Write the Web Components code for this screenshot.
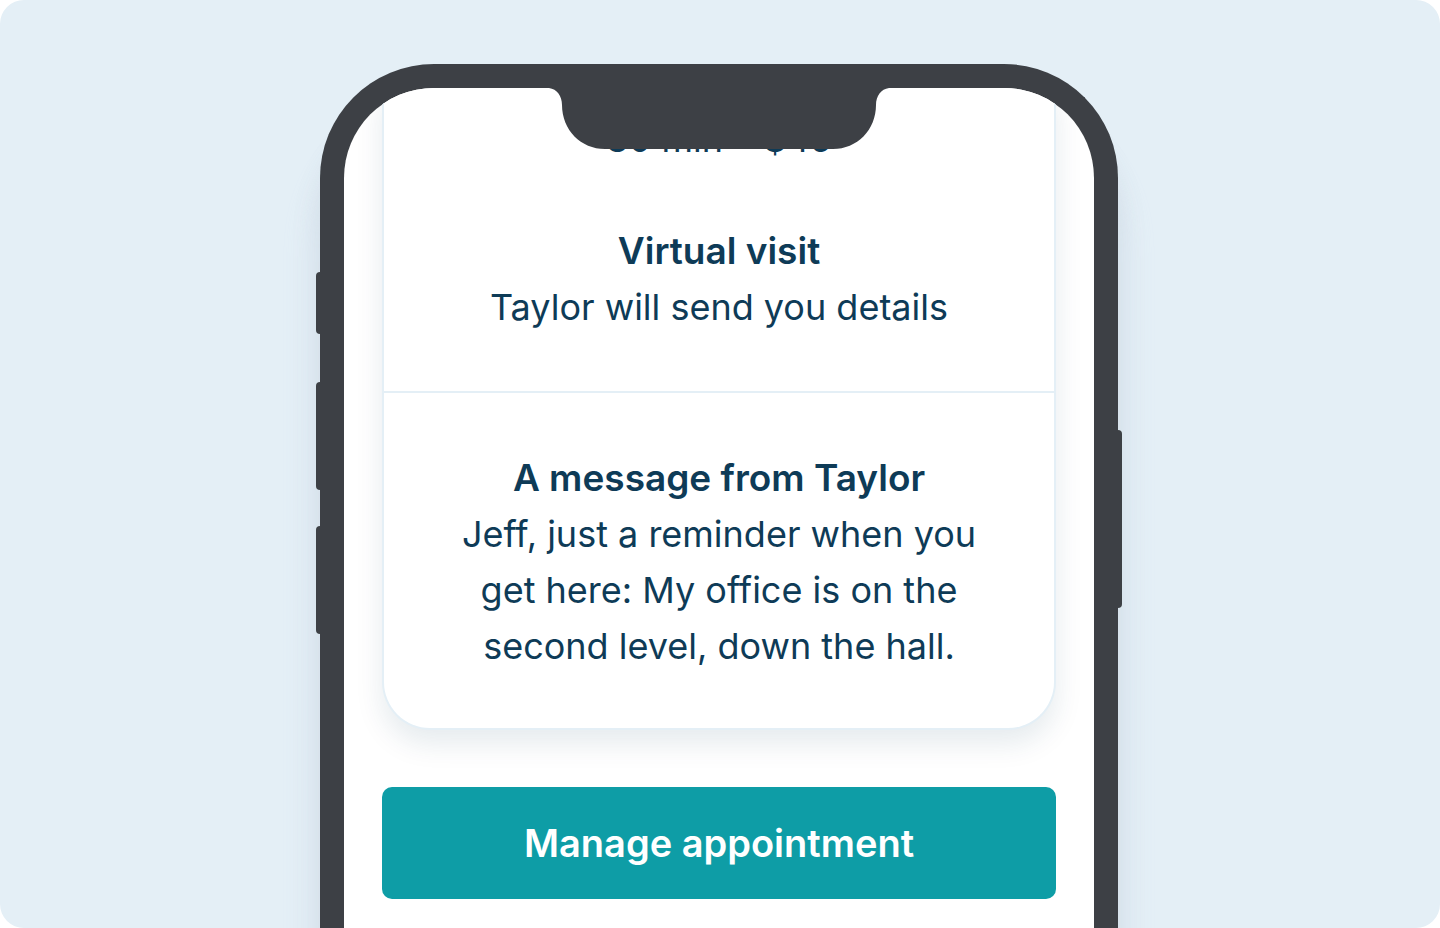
<!DOCTYPE html>
<html lang="en">
<head>
<meta charset="utf-8">
<meta name="viewport" content="width=device-width, initial-scale=1">
<title>Appointment details</title>
<style>
  body { margin: 0; background: #fff; font-family: Inter, "Open Sans", sans-serif; color: #0e3b57; }
</style>
</head>
<body>
<preview-stage>
  <phone-frame>
    <appointment-card>
      <p slot="price">30 min • $45</p>
      <detail-block>
        <span slot="title">Virtual visit</span>
        Taylor will send you details
      </detail-block>
      <detail-block slot="message">
        <span slot="title">A message from Taylor</span>
        Jeff, just a reminder when you get here: My office is on the second level, down the hall.
      </detail-block>
    </appointment-card>
    <action-button>Manage appointment</action-button>
  </phone-frame>
</preview-stage>

<script>
  function define(name, html) {
    const template = document.createElement('template');
    template.innerHTML = html;
    customElements.define(name, class extends HTMLElement {
      constructor() {
        super();
        this.attachShadow({ mode: 'open' }).append(template.content.cloneNode(true));
      }
    });
  }

  define('preview-stage', `
    <style>
      :host { display: flex; justify-content: center; box-sizing: border-box; min-height: 100vh;
              padding: 64px 6px 0 4px; border-radius: 24px; overflow: hidden; background: #e4eff6; }
    </style>
    <slot></slot>`);

  define('phone-frame', `
    <style>
      :host { display: flex; position: relative; box-sizing: border-box; width: 100%; max-width: 798px;
              border: 24px solid #3d4045; border-bottom: 0; border-radius: 114px 114px 0 0;
              background: #3d4045; box-shadow: 0 64px 40px rgba(222, 232, 248, .4), 0 48px 28px rgba(90, 105, 125, .18); }
      .screen { flex: 1; min-width: 0; padding: 0 38px 28px; border-radius: 90px 90px 0 0;
                overflow: hidden; background: #fff; }
      .notch { position: absolute; top: 0; left: 50%; width: 340px; height: 61px; margin-left: -170px; }
      .key { position: absolute; width: 4px; background: #3d4045; }
      .left { left: -28px; border-radius: 4px 0 0 4px; }
      .right { right: -28px; border-radius: 0 4px 4px 0; }
      .mute { top: 184px; height: 62px; }
      .up { top: 294px; height: 108px; }
      .down { top: 438px; height: 108px; }
      .power { top: 342px; height: 178px; }
    </style>
    <span class="key left mute"></span>
    <span class="key left up"></span>
    <span class="key left down"></span>
    <span class="key right power"></span>
    <div class="screen"><slot></slot></div>
    <svg class="notch" viewBox="0 0 340 61" aria-hidden="true">
      <path fill="#3d4045" d="M0 0C8 1 13 8 13 17C13 42 32 61 56 61H284C308 61 327 42 327 17C327 8 332 1 340 0Z"/>
    </svg>`);

  define('appointment-card', `
    <style>
      :host { display: block; border: 2px solid #e4eff6; border-top: 0; border-radius: 0 0 48px 48px;
              background: #fff; box-shadow: 0 14px 28px rgba(14, 59, 87, .1);
              font-size: 36px; line-height: 56px; font-weight: 400; text-align: center; }
      .summary { padding: 23px 56px 56px; border-bottom: 2px solid #e4eff6; }
      .message { padding: 57px 56px 54px; }
      ::slotted(p) { margin: 0 0 56px; }
    </style>
    <div class="summary"><slot name="price"></slot><slot></slot></div>
    <div class="message"><slot name="message"></slot></div>`);

  define('detail-block', `
    <style>
      :host { display: block; }
      h2, p { margin: 0; font-size: inherit; }
      h2 { font-size: 37px; font-weight: 600; }
    </style>
    <h2><slot name="title"></slot></h2>
    <p><slot></slot></p>`);

  define('action-button', `
    <style>
      :host { display: block; margin-top: 57px; }
      button { display: block; width: 100%; padding: 28px; border: 0; border-radius: 10px; background: #0e9da6;
               color: #fff; font: inherit; font-size: 38px; line-height: 56px; font-weight: 600; }
    </style>
    <button type="button"><slot></slot></button>`);
</script>
</body>
</html>
